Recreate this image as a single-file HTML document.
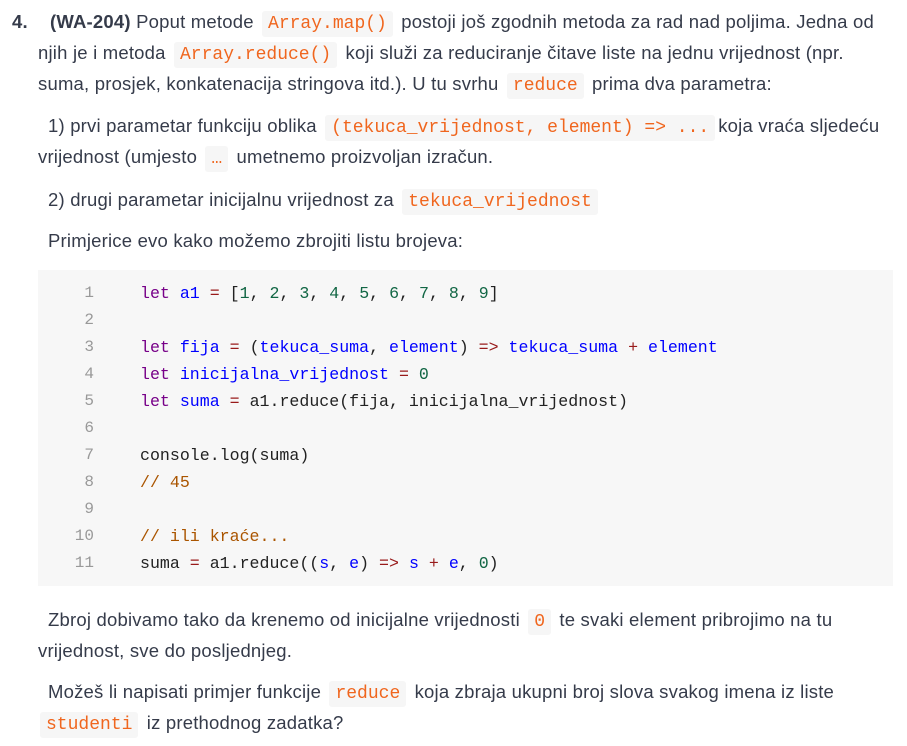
<!DOCTYPE html>
<html><head><meta charset="utf-8"><style>
body{margin:0;width:907px;height:746px;background:#fff;position:relative;overflow:hidden;font-family:"Liberation Sans",sans-serif;color:#353b4a;font-size:18.5px;letter-spacing:0.2px}
.l{position:absolute;white-space:nowrap;height:31px;line-height:31px}
code{font-family:"Liberation Mono",monospace;font-size:18px;letter-spacing:0;color:#f0661e;background:#f6f6f6;padding:3px 6px;border-radius:3px;margin:0 3px}
.cb{position:absolute;left:38px;top:270px;width:855px;height:316px;background:#f7f7f7}
.c{position:absolute;white-space:nowrap;font-family:"Liberation Mono",monospace;font-size:16.6px;letter-spacing:0;line-height:27px;color:#222}
.n{position:absolute;width:54px;text-align:right;left:40px;color:#999;font-family:"Liberation Mono",monospace;font-size:16px;letter-spacing:0;line-height:27px}
.k{color:#770088}.v{color:#0000ff}.o{color:#981a1a}.d{color:#116644}.m{color:#aa5500}
</style></head><body>
<div class="l" style="left:12px;top:6px"><b>4.</b></div>
<div class="l" style="left:50px;top:6px"><b>(WA-204)</b> Poput metode <code>Array.map()</code> postoji još zgodnih metoda za rad nad poljima. Jedna od</div>
<div class="l" style="left:38px;top:37px">njih je i metoda <code>Array.reduce()</code> koji služi za reduciranje čitave liste na jednu vrijednost (npr.</div>
<div class="l" style="left:38px;top:68px">suma, prosjek, konkatenacija stringova itd.). U tu svrhu <code>reduce</code> prima dva parametra:</div>
<div class="l" style="left:48px;top:110px">1) prvi parametar funkciju oblika <code>(tekuca_vrijednost, element) =&gt; ...</code>koja vraća sljedeću</div>
<div class="l" style="left:38px;top:141px">vrijednost (umjesto <code>…</code> umetnemo proizvoljan izračun.</div>
<div class="l" style="left:48px;top:184px">2) drugi parametar inicijalnu vrijednost za <code>tekuca_vrijednost</code></div>
<div class="l" style="left:48px;top:225px">Primjerice evo kako možemo zbrojiti listu brojeva:</div>
<div class="cb"></div>
<div class="n" style="top:280px">1<br>2<br>3<br>4<br>5<br>6<br>7<br>8<br>9<br>10<br>11</div>
<div class="c" style="left:140px;top:280px"><span class="k">let</span> <span class="v">a1</span> <span class="o">=</span> [<span class="d">1</span>, <span class="d">2</span>, <span class="d">3</span>, <span class="d">4</span>, <span class="d">5</span>, <span class="d">6</span>, <span class="d">7</span>, <span class="d">8</span>, <span class="d">9</span>]<br>&nbsp;<br><span class="k">let</span> <span class="v">fija</span> <span class="o">=</span> (<span class="v">tekuca_suma</span>, <span class="v">element</span>) <span class="o">=&gt;</span> <span class="v">tekuca_suma</span> <span class="o">+</span> <span class="v">element</span><br><span class="k">let</span> <span class="v">inicijalna_vrijednost</span> <span class="o">=</span> <span class="d">0</span><br><span class="k">let</span> <span class="v">suma</span> <span class="o">=</span> a1.reduce(fija, inicijalna_vrijednost)<br>&nbsp;<br>console.log(suma)<br><span class="m">// 45</span><br>&nbsp;<br><span class="m">// ili kraće...</span><br>suma <span class="o">=</span> a1.reduce((<span class="v">s</span>, <span class="v">e</span>) <span class="o">=&gt;</span> <span class="v">s</span> <span class="o">+</span> <span class="v">e</span>, <span class="d">0</span>)</div>
<div class="l" style="left:48px;top:604px">Zbroj dobivamo tako da krenemo od inicijalne vrijednosti <code>0</code> te svaki element pribrojimo na tu</div>
<div class="l" style="left:38px;top:635px">vrijednost, sve do posljednjeg.</div>
<div class="l" style="left:48px;top:676px">Možeš li napisati primjer funkcije <code>reduce</code> koja zbraja ukupni broj slova svakog imena iz liste</div>
<div class="l" style="left:38px;top:707px"><code style="margin-left:2px">studenti</code> iz prethodnog zadatka?</div>
</body></html>
